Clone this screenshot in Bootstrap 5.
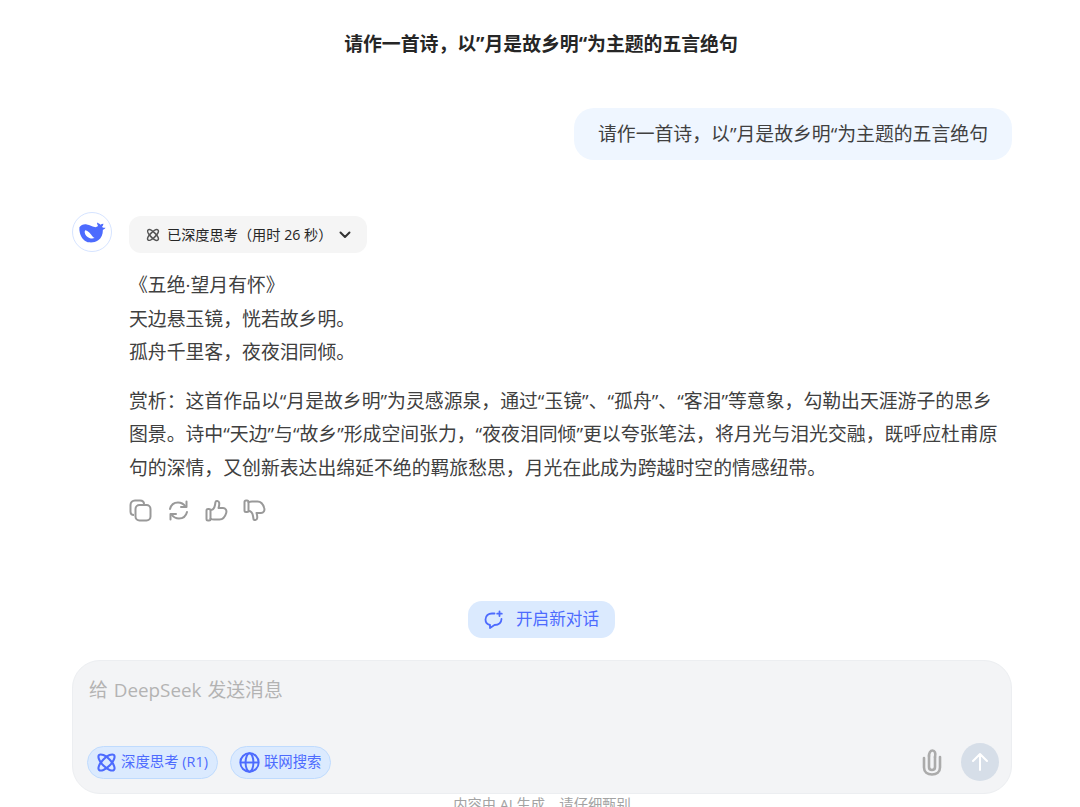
<!DOCTYPE html>
<html lang="zh">
<head>
<meta charset="utf-8">
<title>DeepSeek</title>
<link href="https://cdn.jsdelivr.net/npm/bootstrap@5.3.0/dist/css/bootstrap.min.css" rel="stylesheet">
<style>
html,body{height:807px;overflow:hidden;background:#fff}
body{font-family:"Open Sans","Noto Sans CJK SC",sans-serif;color:#404040;font-size:18.85px}
.shell{width:940px;margin-left:72px}
.chat-title{height:108px;padding-top:30px;font-size:18.85px;font-weight:700;line-height:28px;color:#262626;text-align:center;margin-left:-1px;width:940px}
.user-row{margin-bottom:52px}
.user-bubble{background:#eff6ff;border-radius:20px;height:52px;width:438px;line-height:52px;text-align:center;color:#404040;white-space:nowrap}
.avatar{width:40px;height:40px;border:1px solid #d6e4ff;border-radius:50%;flex:none}
.answer{margin-left:17px;width:880px}
.think-btn{width:238px;height:37px;margin-top:4px;background:#f5f5f5;border-radius:12px;font-size:14.2px;color:#262626;padding-left:17px;gap:7px}
.think-btn .tail{margin-left:auto;margin-right:16px}
.poem{margin-top:16px;line-height:33.5px}
.poem p{margin:0}
.poem .gap{margin-top:15px}
.actions{margin-top:14px;gap:15px;color:#999}
.new-wrap{margin-top:79px;height:59px}
.new-btn{width:147px;height:37px;background:#dbeafe;border-radius:14px;color:#4d6bfe;font-size:16.6px;gap:12px;margin-left:396px}
.composer{height:134px;background:#f3f4f6;border:1px solid #eceef1;border-radius:28px;padding:15px 12px 12px 16px;display:flex;flex-direction:column}
.hint{font-size:18.85px;line-height:28px;color:#b3b3b3;word-spacing:1px}
.chip{height:33px;background:#dbeafe;border:1px solid #bfdbfe;border-radius:17px;color:#4d6bfe;font-size:14.4px;padding:0 9px 0 8px;gap:4px}
.chip-first{margin-left:-2px;margin-right:12px}
.clip{margin-right:17px}
.send{width:38px;height:38px;border-radius:50%;background:#d6dee8}
.legal{margin-top:2px;text-align:center;font-size:14.3px;line-height:18px;color:#a3a3a3}
</style>
</head>
<body>
<div class="shell">
  <div class="chat-title">请作一首诗，以”月是故乡明“为主题的五言绝句</div>
  <div class="user-row d-flex justify-content-end">
    <div class="user-bubble">请作一首诗，以”月是故乡明“为主题的五言绝句</div>
  </div>
  <div class="d-flex">
    <div class="avatar d-flex align-items-center justify-content-center">
      <svg width="27" height="21" viewBox="0 0 26 20"><path fill="#4d6bfe" d="M.4 5C2 2.800 4.500 1.800 7.500 2.300c3 .4 5 2 7.500 2.500 1.300.2 2.500-.2 3.300-1C17.700 2.800 17.300 1.500 17.300.4c1.300.4 2.600 1.200 3.400 2.200.7-.6 1.700-1 2.900-1-.2 1.200-.7 2.200-1.500 3 1 .6 2.300.9 3.400.8-.5 1-1.500 1.700-2.500 1.900 0 4.800-1.500 8-4.500 10.200-2.500 1.700-5.500 2.300-8.700 2C6 19.300 2 15.500.8 10.200.4 8.500.2 6.800.4 5z"/><path fill="#fff" d="M6 7.800c2.300.4 4 2 5.200 3.700 1 1.400 2.200 2.900 3.800 3.800-1.800.6-3.500.5-5-.1C7.500 14.300 5.800 12.300 5.500 10c-.1-.8.100-1.600.5-2.200z"/></svg>
    </div>
    <div class="answer">
      <div class="think-btn d-flex align-items-center">
        <svg width="14" height="14" viewBox="0 0 24 24" fill="none" stroke="#555" stroke-width="2.600"><ellipse cx="12" cy="12" rx="12" ry="4.500" transform="rotate(45 12 12)"/><ellipse cx="12" cy="12" rx="12" ry="4.500" transform="rotate(-45 12 12)"/></svg>
        <span>已深度思考（用时 26 秒）</span>
        <svg class="tail" width="12" height="8" viewBox="0 0 12 8" fill="none" stroke="#333" stroke-width="2" stroke-linecap="round" stroke-linejoin="round"><path d="M1.500 1.500 6 6l4.500-4.500"/></svg>
      </div>
      <div class="poem">
        <p>《五绝·望月有怀》</p>
        <p>天边悬玉镜，恍若故乡明。</p>
        <p>孤舟千里客，夜夜泪同倾。</p>
        <p class="gap">赏析：这首作品以“月是故乡明”为灵感源泉，通过“玉镜”、“孤舟”、“客泪”等意象，勾勒出天涯游子的思乡图景。诗中“天边”与“故乡”形成空间张力，“夜夜泪同倾”更以夸张笔法，将月光与泪光交融，既呼应杜甫原句的深情，又创新表达出绵延不绝的羁旅愁思，月光在此成为跨越时空的情感纽带。</p>
      </div>
      <div class="actions d-flex align-items-center">
        <svg width="23" height="23" viewBox="0 0 23 23" fill="none" stroke="currentColor" stroke-width="2"><path d="M5 16c-2 0-3.500-1.500-3.500-3.500V6c0-2.500 2-4.500 4.500-4.500h5C13.500 1.500 15 3 15 5"/><rect x="6.500" y="6" width="15" height="15.500" rx="4"/></svg>
        <svg width="23" height="23" viewBox="0 0 23 23" fill="none" stroke="currentColor" stroke-width="2" stroke-linecap="round" stroke-linejoin="round"><path d="M3 10c1-4 4-6.500 8-6.500 3 0 5.500 1.200 7.500 4"/><path d="M19.500 2.500v5.500H14"/><path d="M20 13c-1 4-4 6.500-8 6.500-3 0-5.500-1.200-7.500-4"/><path d="M3.500 20.500V15H9"/></svg>
        <svg width="23" height="23" viewBox="0 0 23 23" fill="none" stroke="currentColor" stroke-width="2" stroke-linejoin="round"><rect x="1.500" y="10" width="4" height="11.500" rx="1.500"/><path d="M5.500 11c2 0 4-2 4.500-5l.5-3c.2-1.500 3.500-1.500 3.700 1 .2 1.500-.2 3.500-.7 5h4.500c2.500 0 4 2.500 3.200 5-1 3.500-3 6.500-6.700 6.500H9c-1.500 0-3.500-.5-3.500-1.500"/></svg>
        <svg width="23" height="23" viewBox="0 0 23 23" fill="none" stroke="currentColor" stroke-width="2" stroke-linejoin="round"><g transform="rotate(180 11.500 11.500) scale(-1 1) translate(-23 0)"><rect x="1.500" y="10" width="4" height="11.500" rx="1.500"/><path d="M5.500 11c2 0 4-2 4.500-5l.5-3c.2-1.500 3.500-1.500 3.700 1 .2 1.500-.2 3.500-.7 5h4.500c2.500 0 4 2.500 3.200 5-1 3.500-3 6.500-6.700 6.500H9c-1.500 0-3.500-.5-3.500-1.500"/></g></svg>
      </div>
    </div>
  </div>
  <div class="new-wrap">
    <div class="new-btn d-flex align-items-center justify-content-center">
      <svg width="20" height="20" viewBox="0 0 20 20" fill="none" stroke="#4d6bfe" stroke-width="1.800" stroke-linecap="round" stroke-linejoin="round"><path d="M10.500 3.500H8C4.500 3.500 1.500 5.500 1.500 9.500c0 3 2 5 4.500 5.500v3l4.500-3c3.800 0 6.800-2 7-6"/><path d="M15.500 1.500v4.500M13.200 3.700h4.600"/></svg>
      <span>开启新对话</span>
    </div>
  </div>
  <div class="composer">
    <div class="hint">给 DeepSeek 发送消息</div>
    <div class="d-flex align-items-center mt-auto">
      <div class="chip chip-first d-flex align-items-center">
        <svg width="21" height="21" viewBox="0 0 24 24" fill="none" stroke="#4d6bfe" stroke-width="2.400"><ellipse cx="12" cy="12" rx="12" ry="5" transform="rotate(45 12 12)"/><ellipse cx="12" cy="12" rx="12" ry="5" transform="rotate(-45 12 12)"/></svg>
        <span>深度思考 (R1)</span>
      </div>
      <div class="chip d-flex align-items-center">
        <svg width="21" height="21" viewBox="0 0 24 24" fill="none" stroke="#4d6bfe" stroke-width="2.200"><circle cx="12" cy="12" r="10.500"/><ellipse cx="12" cy="12" rx="4.500" ry="10.500"/><path d="M1.500 12h21"/></svg>
        <span>联网搜索</span>
      </div>
      <svg class="clip ms-auto" width="24" height="28" viewBox="0 0 24 28" fill="none" stroke="#ababab" stroke-width="2.600" stroke-linecap="round"><path d="M9 8v11c0 2 1.300 3 3 3s3-1 3-3V9"/><path d="M4 10v9.500C4 24 7.500 26.500 12 26.500s8-2.500 8-7V9"/><path d="M9 8c0-3 1.300-5.500 3.500-5.500S16 5 15 9"/></svg>
      <div class="send d-flex align-items-center justify-content-center">
        <svg width="18" height="20" viewBox="0 0 18 20" fill="none" stroke="#fff" stroke-width="2" stroke-linecap="round" stroke-linejoin="round"><path d="M9 18V2M2 9l7-7 7 7"/></svg>
      </div>
    </div>
  </div>
  <div class="legal">内容由 AI 生成，请仔细甄别</div>
</div>
</body>
</html>
